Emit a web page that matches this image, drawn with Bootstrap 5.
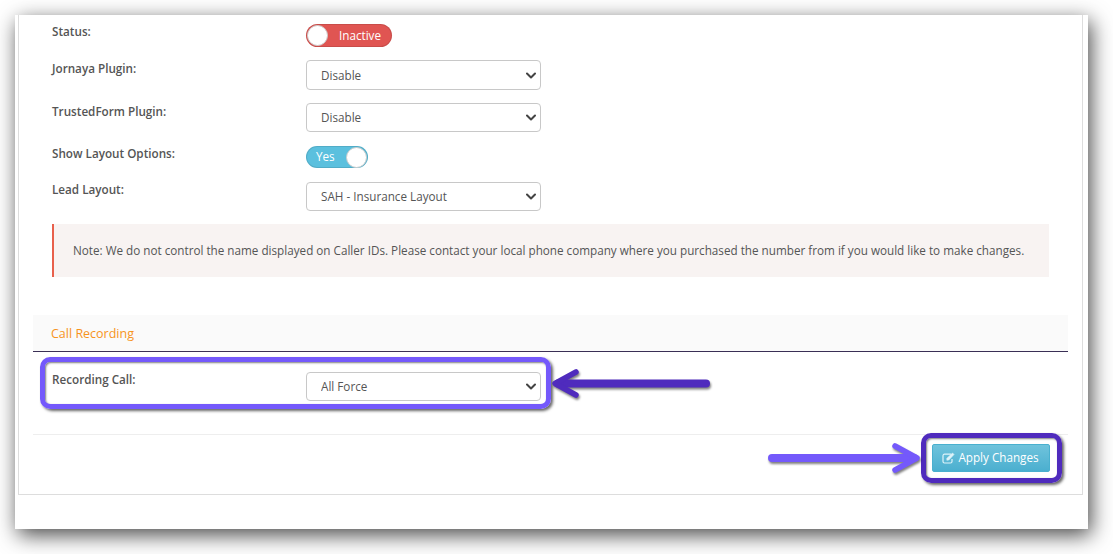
<!DOCTYPE html>
<html lang="en">
<head>
<meta charset="utf-8">
<title>Call settings</title>
<link href="https://cdn.jsdelivr.net/npm/bootstrap@5.3.0/dist/css/bootstrap.min.css" rel="stylesheet">
<style>
html,body{height:554px;overflow:hidden;background:#fff}
body{font-family:"Open Sans","Liberation Sans",sans-serif;font-size:11.7px;color:#555;position:relative}
.sheet{margin:15px 25px 0 15px;height:514px;background:#fff;box-shadow:3px 6px 20px rgba(0,0,0,.72);padding:0 5px 34px 3px}
.panel-box{height:100%;border:1px solid #ddd;border-top:0;padding:0 14px}
.form-area{padding:9px 19px 0}
.field-row{display:flex;align-items:flex-start}
.field-label{width:254px;font-weight:600;font-size:11.7px;line-height:15px;color:#555}
.field-select{width:235px;height:29px;font-size:11.7px;color:#555;padding:0 30px 0 14px;border-color:#c8c8c8;border-radius:4px;background-image:url("data:image/svg+xml,%3csvg xmlns='http://www.w3.org/2000/svg' viewBox='0 0 10 7'%3e%3cpath fill='none' stroke='%23444' stroke-width='2' stroke-linecap='round' stroke-linejoin='round' d='M1 1.500 5 5.500 9 1.500'/%3e%3c/svg%3e");background-size:10px 7px;background-position:right 4px center;font-family:inherit}
.r1{height:36px}
.r2{height:43px}.r2 .field-label{padding-top:1px}.r2 .field-select{height:30px;padding-top:1px}
.r3{height:43px}.r3 .field-label{padding-top:1px}
.r4{height:36px}
.r5{height:42px}
.toggle-pill{display:flex;align-items:center;border-radius:12px;color:#fff;font-size:11.7px;box-shadow:0 0 0 1px rgba(0,0,0,.1) inset}
.pill-off{width:86px;height:23px;background:#e05552;padding:0 1px;justify-content:space-between}
.pill-off span{padding-right:10px}
.pill-on{width:62px;height:22px;background:#5bc0de;padding:0 1px 0 10px;justify-content:space-between;margin-top:0}
.knob{width:21px;height:21px;border-radius:50%;background:#fff;border:1px solid #ccc}
.note-box{height:53px;background:#f8f3f2;border-left:2px solid #e8604c;padding:0 19px;display:flex;align-items:center;color:#555;font-size:11.7px}
.sec-head{margin-top:38px;height:37px;background:#fafafa;border-bottom:1px solid #3a2f55;padding:2px 18px 0;display:flex;align-items:center;color:#f7941d;font-size:12.5px}
.rec-area{padding:20px 19px 0;height:83px;border-bottom:1px solid #eee}
.foot-row{display:flex;justify-content:flex-end;padding:9px 18px 0}
.apply-btn{width:118px;height:28px;padding:0 1px 0 0;border:1px solid #4ab0cf;border-radius:2px;background:linear-gradient(#6fc3dc,#4bafcf);color:#fff;font-size:11.7px;display:flex;align-items:center;justify-content:center;gap:3px}
.mark-box{position:absolute;border-radius:10px;box-shadow:2px 2px 3px rgba(0,0,0,.6),inset 1px 1px 2px rgba(0,0,0,.5)}
.mark-a{left:40px;top:357px;width:511px;height:52px;border:5px solid #7459fb}
.mark-b{left:921px;top:433px;width:141px;height:50px;border:5px solid #4f2bbd}
.arrow-svg{position:absolute;overflow:visible}
.arr-a{left:550px;top:365px}
.arr-b{left:768px;top:443px}
</style>
</head>
<body>
<div class="sheet">
  <div class="panel-box">
    <div class="form-area">
      <div class="field-row r1"><div class="field-label">Status:</div><div class="toggle-pill pill-off"><div class="knob"></div><span>Inactive</span></div></div>
      <div class="field-row r2"><div class="field-label">Jornaya Plugin:</div><select class="form-select field-select"><option>Disable</option></select></div>
      <div class="field-row r3"><div class="field-label">TrustedForm Plugin:</div><select class="form-select field-select"><option>Disable</option></select></div>
      <div class="field-row r4"><div class="field-label">Show Layout Options:</div><div class="toggle-pill pill-on"><span>Yes</span><div class="knob"></div></div></div>
      <div class="field-row r5"><div class="field-label">Lead Layout:</div><select class="form-select field-select"><option>SAH - Insurance Layout</option></select></div>
      <div class="note-box">Note: We do not control the name displayed on Caller IDs. Please contact your local phone company where you purchased the number from if you would like to make changes.</div>
    </div>
    <div class="sec-head">Call Recording</div>
    <div class="rec-area"><div class="field-row"><div class="field-label">Recording Call:</div><select class="form-select field-select"><option>All Force</option></select></div></div>
    <div class="foot-row"><button type="button" class="btn apply-btn"><svg width="13" height="12" viewBox="0 0 13 12" fill="none" stroke="#dff3f9" stroke-width="1.2"><path d="M9 2.200H2.500A1.500 1.500 0 0 0 1 3.700v5.800A1.500 1.500 0 0 0 2.500 11h6A1.500 1.500 0 0 0 10 9.500V7"/><path d="M5 6.200 10.500 1 12 2.500 6.800 8 4.800 8.200z" fill="#dff3f9" stroke-width=".6"/></svg>Apply Changes</button></div>
  </div>
</div>
<div class="mark-box mark-a"></div>
<div class="mark-box mark-b"></div>
<svg class="arrow-svg arr-a" width="162" height="38" viewBox="0 0 162 38" fill="none" stroke="#4f2bbd" stroke-linecap="round" stroke-linejoin="round"><g style="filter:drop-shadow(1px 2px 1px rgba(0,0,0,.5))"><path d="M8 18.500H156" stroke-width="8"/><path d="M26 7 5 18.500 26 30" stroke-width="5.500"/></g></svg>
<svg class="arrow-svg arr-b" width="156" height="30" viewBox="0 0 156 30" fill="none" stroke="#7459fb" stroke-linecap="round" stroke-linejoin="round"><g style="filter:drop-shadow(1px 2px 1px rgba(0,0,0,.5))"><path d="M4 15H146" stroke-width="8"/><path d="M127 3 149 15 127 27" stroke-width="5.500"/></g></svg>
<script src="https://cdn.jsdelivr.net/npm/bootstrap@5.3.0/dist/js/bootstrap.bundle.min.js"></script>
</body>
</html>
